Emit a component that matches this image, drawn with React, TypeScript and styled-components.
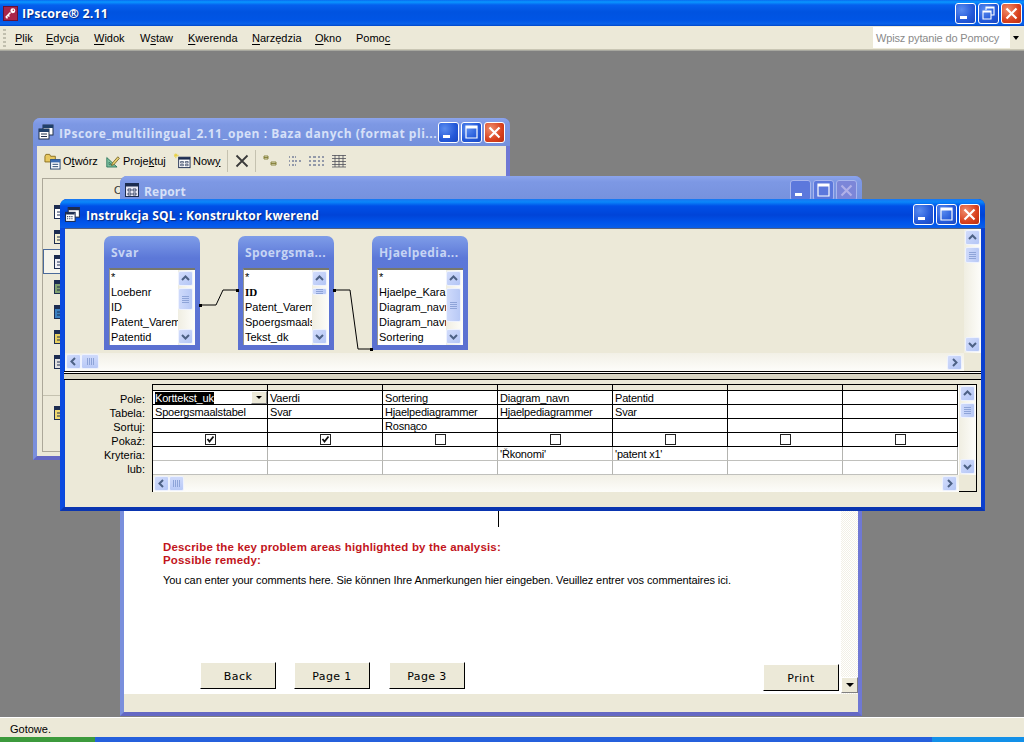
import React from 'react';
import styled, { createGlobalStyle } from 'styled-components';

const UI_FONT = `"Liberation Sans", "Noto Sans", sans-serif`;
const TITLE_FONT = `"Open Sans", "Noto Sans", sans-serif`;

const GlobalStyle = createGlobalStyle`
  html, body { margin: 0; padding: 0; background: #808080; }
  #root { width: 1024px; height: 742px; overflow: hidden; }
  * { box-sizing: border-box; }
`;

const Screen = styled.div`
  width: 1024px;
  height: 742px;
  display: flex;
  flex-direction: column;
  font-family: ${UI_FONT};
  font-size: 11px;
  color: #000;
  overflow: hidden;
`;

const AppTitle = styled.div`
  height: 26px;
  flex: none;
  display: flex;
  align-items: center;
  padding: 0 2px 0 3px;
  background: linear-gradient(180deg, #0a6af0 0, #0997ff 2px, #0560ee 5px, #0053e0 12px, #0055e5 20px, #0a62ea 24px, #0046c8 26px);
`;

const AppName = styled.span`
  margin-left: 4px;
  flex: 1;
  font-family: ${TITLE_FONT};
  font-weight: 700;
  font-size: 12.5px;
  letter-spacing: 0.15px;
  color: #fff;
  text-shadow: 1px 1px 1px #0a2a80;
`;

const CaptionGroup = styled.div`
  display: flex;
  gap: 2px;
`;

const CaptionBtn = styled.div<{ $kind: string; $dim?: boolean }>`
  width: 21px;
  height: 21px;
  border-radius: 3px;
  border: 1px solid ${p => (p.$dim ? '#a8b6ee' : '#fff')};
  background: ${p =>
    p.$kind === 'close'
      ? p.$dim ? '#7c86d8' : 'radial-gradient(circle at 30% 30%, #ef8d6c, #d9411e 60%, #b92e10)'
      : p.$dim ? '#5c78dc' : 'radial-gradient(circle at 30% 30%, #5a8cf0, #2358d8 60%, #1a48c0)'};
  display: flex;
  svg { display: block; }
`;

const Caption = ({ kind, dim }: { kind: string; dim?: boolean }) => (
  <CaptionBtn $kind={kind} $dim={dim}>
    <svg width="19" height="19" viewBox="0 0 19 19">
      {kind === 'min' && <rect x="4" y="12" width="7" height="3" fill="#fff" />}
      {kind === 'max' && (
        <path d="M4 3h11v12H4z M4 4.5h11" fill="none" stroke="#fff" strokeWidth="1.2" />
      )}
      {kind === 'max' && <rect x="4" y="3" width="11" height="2.5" fill="#fff" />}
      {kind === 'restore' && (
        <path d="M7 6V3h8v8h-3 M4 7h8v8H4z M4 8h8 M7 4h8" fill="none" stroke="#fff" strokeWidth="1.1" />
      )}
      {kind === 'close' && (
        <path d="M4.5 4.5l10 10M14.5 4.5l-10 10" stroke={dim ? '#b0b0e8' : '#fff'} strokeWidth="2.2" />
      )}
    </svg>
  </CaptionBtn>
);

const MenuBar = styled.div`
  height: 24px;
  flex: none;
  display: flex;
  align-items: center;
  background: #ece9d8;
  border-bottom: 1px solid #c9c6b4;
  padding: 0 2px 0 3px;
`;

const Gripper = styled.div`
  width: 3px;
  height: 18px;
  margin-right: 9px;
  background: repeating-linear-gradient(180deg, #c1bfae 0 2px, transparent 2px 4px);
`;

const MenuItem = styled.span<{ $w: number }>`
  width: ${p => p.$w}px;
  u { text-underline-offset: 2px; }
`;

const HelpBox = styled.div`
  margin-left: auto;
  width: 149px;
  height: 21px;
  display: flex;
  align-items: center;
  background: #fff;
  color: #8a8a8a;
  padding-left: 3px;
  letter-spacing: -0.15px;
  span { flex: 1; }
`;

const HelpArrow = styled.div`
  width: 12px;
  height: 21px;
  background: #ece9d8;
  display: flex;
  align-items: center;
  justify-content: center;
  &::after {
    content: '';
    border: 3.5px solid transparent;
    border-top: 4px solid #000;
    border-bottom: 0;
  }
`;

const Desktop = styled.div`
  position: relative;
  flex: 1;
  background: #808080;
  border-top: 1px solid #a8a8a0;
`;

const Win = styled.div<{ $x: number; $y: number; $w: number; $h: number; $active?: boolean }>`
  position: absolute;
  left: ${p => p.$x}px;
  top: ${p => p.$y - 51}px;
  width: ${p => p.$w}px;
  height: ${p => p.$h}px;
  display: flex;
  flex-direction: column;
  border-radius: 7px 7px 0 0;
  background: ${p => (p.$active ? '#0a47d8' : '#7b92e0')};
  border-left: 4px solid ${p => (p.$active ? '#0a4ae0' : '#7a8fdc')};
  border-right: 4px solid ${p => (p.$active ? '#0a3fd0' : '#6f78d4')};
  border-bottom: 4px solid ${p => (p.$active ? '#0a35b0' : '#6468c4')};
`;

const WinTitle = styled.div<{ $h: number; $active?: boolean }>`
  height: ${p => p.$h}px;
  flex: none;
  margin: 0 -4px;
  padding: ${p => (p.$active ? '2px' : '0')} 5px 0 5px;
  display: flex;
  align-items: center;
  border-radius: 7px 7px 0 0;
  background: ${p =>
    p.$active
      ? 'linear-gradient(180deg, #1a76f0 0, #0a86fa 3px, #0050e8 7px, #0044d8 16px, #0055ec 24px, #0a5ee8 100%)'
      : 'linear-gradient(180deg, #8ca4ec 0, #7d98e4 6px, #7490dc 100%)'};
`;

const WinName = styled.span<{ $active?: boolean; $wide?: boolean }>`
  flex: 1;
  margin-left: 5px;
  padding-top: 2px;
  font-family: ${TITLE_FONT};
  font-weight: 700;
  font-size: 12px;
  letter-spacing: ${p => (p.$wide ? '0.52px' : '0.2px')};
  white-space: nowrap;
  overflow: hidden;
  color: ${p => (p.$active ? '#fff' : '#d6e0f8')};
  text-shadow: ${p => (p.$active ? '1px 1px 1px #0a2a80' : 'none')};
`;

/* back window */
const DbToolbar = styled.div`
  height: 30px;
  flex: none;
  display: flex;
  align-items: center;
  background: #ece9d8;
  padding-left: 7px;
`;

const ToolBtn = styled.span<{ $w: number }>`
  width: ${p => p.$w}px;
  display: flex;
  align-items: center;
  gap: 2px;
`;

const ToolSep = styled.span`
  width: 1px;
  height: 22px;
  background: #c5c2b0;
  margin: 0 7px 0 6px;
`;

const DbBody = styled.div`
  flex: 1;
  background: #ece9d8;
  padding: 2px 4px 4px 5px;
  display: flex;
`;

const DbFrame = styled.div`
  flex: 1;
  border: 1px solid #aca899;
  background: #fff;
  display: flex;
`;

const ObjectRail = styled.div`
  width: 92px;
  background: #ece9d8;
  display: flex;
  flex-direction: column;
  border-right: 1px solid #aca899;
`;

const RailHead = styled.div`
  height: 20px;
  flex: none;
  padding: 4px 0 0 71px;
  line-height: 14px;
  color: #333;
`;

const ObjectSlot = styled.div<{ $h: number; $sel?: boolean }>`
  height: ${p => p.$h}px;
  padding-left: 10px;
  display: flex;
  align-items: center;
  border: 1px solid ${p => (p.$sel ? '#4a6a9a' : 'transparent')};
  background: ${p => (p.$sel ? '#f5f4ec' : 'transparent')};
`;

const RailGap = styled.div<{ $h: number }>`
  height: ${p => p.$h}px;
  border-bottom: 1px solid #c5c2b0;
`;

/* report window */
const ReportBody = styled.div`
  flex: 1;
  display: flex;
  flex-direction: column;
  background: #fff;
`;

const ReportMain = styled.div`
  flex: 1;
  display: flex;
`;

const ReportPage = styled.div`
  flex: 1;
  display: flex;
  flex-direction: column;
`;

const PageRule = styled.div`
  margin-left: 374px;
  width: 1px;
  height: 323px;
  background: #000;
  flex: none;
`;

const Problem = styled.div`
  margin: 14px 0 0 39px;
  font-weight: 700;
  font-size: 11.5px;
  letter-spacing: 0.17px;
  line-height: 13px;
  color: #c2151c;
  height: 26px;
`;

const Comment = styled.div`
  margin: 6px 0 0 39px;
  line-height: 14px;
  letter-spacing: -0.1px;
`;

const ButtonRow = styled.div`
  margin-top: auto;
  display: flex;
  align-items: flex-start;
  height: 32px;
  padding-left: 76px;
`;

const PageButton = styled.div<{ $gap?: number; $drop?: number }>`
  width: 76px;
  height: 27px;
  margin-left: ${p => p.$gap ?? 0}px;
  margin-top: ${p => p.$drop ?? 0}px;
  padding-top: 1px;
  background: #ece9d8;
  border: 1px solid;
  border-color: #fff #000 #000 #fff;
  display: flex;
  align-items: center;
  justify-content: center;
  font-family: "DejaVu Sans", sans-serif;
  font-size: 11px;
  letter-spacing: 0.4px;
`;

const ReportScroll = styled.div`
  width: 17px;
  display: flex;
  flex-direction: column;
  justify-content: flex-end;
  background: repeating-conic-gradient(#f2f0e6 0 25%, #fff 0 50%) 0 0 / 2px 2px;
`;

const ReportDrop = styled.div`
  width: 17px;
  height: 16px;
  margin-bottom: 1px;
  background: #ece9d8;
  border: 1px solid;
  border-color: #fff #808080 #808080 #fff;
  display: flex;
  align-items: center;
  justify-content: center;
  &::after {
    content: '';
    border: 4px solid transparent;
    border-top: 4px solid #000;
    border-bottom: 0;
  }
`;

const ReportFooter = styled.div`
  height: 18px;
  flex: none;
  background: #ece9d8;
`;

/* query designer */
const DesignerBody = styled.div`
  flex: 1;
  display: flex;
  flex-direction: column;
  background: #ece9d8;
  border-top: 1px solid #56617e;
  margin-left: 1px;
`;

const TablePane = styled.div`
  height: 142px;
  flex: none;
  display: grid;
  grid-template-columns: 1fr 17px;
  grid-template-rows: 1fr 18px;
`;

const Canvas = styled.div`
  position: relative;
  display: flex;
  gap: 38px;
  padding: 7px 0 0 39px;
`;

const Joins = styled.svg`
  position: absolute;
  left: 0;
  top: 0;
`;

const TableCard = styled.div`
  width: 96px;
  height: 114px;
  flex: none;
  display: flex;
  flex-direction: column;
  border-radius: 7px 7px 0 0;
  background: linear-gradient(180deg, #7f9de8 0, #5c78d8 22px, #5b70d0 100%);
  padding: 0 5px 5px;
`;

const TableName = styled.div`
  height: 32px;
  flex: none;
  display: flex;
  align-items: center;
  padding-left: 2px;
  font-family: ${TITLE_FONT};
  font-weight: 700;
  font-size: 12px;
  letter-spacing: 0.4px;
  white-space: nowrap;
  color: #c6d4f4;
`;

const FieldBox = styled.div`
  flex: 1;
  display: flex;
  background: #fff;
  border-top: 2px solid #77786c;
  border-left: 1px solid #9a9a90;
  min-height: 0;
`;

const FieldList = styled.div`
  flex: 1;
  overflow: hidden;
  padding: 0 0 0 1px;
`;

const FieldRow = styled.div<{ $key?: boolean }>`
  height: 15px;
  line-height: 15px;
  white-space: nowrap;
  font-weight: ${p => (p.$key ? 700 : 400)};
  font-family: ${p => (p.$key ? '"Liberation Serif", serif' : 'inherit')};
`;

const VScroll = styled.div`
  width: 17px;
  flex: 1;
  display: flex;
  flex-direction: column;
  padding: 1px;
  background: linear-gradient(90deg, #f0eee2, #fdfdfa);
`;

const CardScroll = styled(VScroll)`
  flex: none;
  padding: 1px 2px 1px 0;
`;

const HScroll = styled.div`
  height: 18px;
  display: flex;
  padding: 1px 2px 1px 1px;
  background: linear-gradient(180deg, #f2f0e6, #fdfdfa);
`;

const ScrollBtn = styled.div<{ $after?: boolean }>`
  width: 15px;
  height: 15px;
  flex: none;
  margin: ${p => (p.$after ? 'auto 0 0 auto' : '0')};
  border-radius: 2px;
  border: 1px solid #eef2fe;
  background: linear-gradient(135deg, #d2dcfb, #b4c6f6);
  display: flex;
  align-items: center;
  justify-content: center;
`;

const Thumb = styled.div<{ $len: number; $horizontal?: boolean }>`
  flex: none;
  width: ${p => (p.$horizontal ? `${p.$len}px` : '15px')};
  height: ${p => (p.$horizontal ? '15px' : `${p.$len}px`)};
  margin: ${p => (p.$horizontal ? '0' : '2px 0 0')};
  border-radius: 2px;
  border: 1px solid #eef2fe;
  background: ${p =>
    p.$horizontal
      ? 'linear-gradient(180deg, #cfdafb, #b8c9f6)'
      : 'linear-gradient(90deg, #cfdafb, #b8c9f6)'};
  display: flex;
  align-items: center;
  justify-content: center;
  &::after {
    content: '';
    width: 7px;
    height: 7px;
    max-height: 100%;
    background: repeating-linear-gradient(
      ${p => (p.$horizontal ? '90deg' : '180deg')},
      #8ea4d8 0 1px,
      transparent 1px 2px
    );
  }
`;

const Corner = styled.div`
  background: #ece9d8;
`;

const GridSide = styled.div`
  width: 17px;
  flex: none;
  display: grid;
  grid-template-rows: 1fr 16px;
`;

const Splitter = styled.div`
  height: 9px;
  flex: none;
  border-top: 1px solid #000;
  border-bottom: 1px solid #000;
  background: linear-gradient(180deg, #fff 0 1px, #000 1px 2px, #d8d5c4 2px, #d8d5c4 100%);
  margin-left: -1px;
`;

const CriteriaPane = styled.div`
  flex: 1;
  display: flex;
  padding: 4px 0 0;
`;

const PaneLabels = styled.div`
  width: 85px;
  flex: none;
  padding: 8px 4px 0 0;
  text-align: right;
  margin-left: -1px;
  margin-right: 3px;
`;

const RowLabel = styled.div`
  height: 14px;
  line-height: 14px;
`;

const GridBox = styled.div`
  width: 825px;
  height: 108px;
  flex: none;
  display: flex;
  border: 1px solid #000;
`;

const GridMain = styled.div`
  width: 806px;
  flex: none;
  display: flex;
  flex-direction: column;
`;

const Grid = styled.div`
  display: grid;
  grid-template-columns: repeat(7, 115px);
  grid-template-rows: 6px repeat(6, 14px);
  height: 90px;
  background: #fff;
`;

const ColHead = styled.div`
  background: #ece9d8;
  border-right: 1px solid #000;
  border-bottom: 1px solid #000;
`;

const Cell = styled.div<{ $soft?: boolean; $center?: boolean }>`
  position: relative;
  height: 14px;
  line-height: 13px;
  padding: ${p => (p.$center ? '0' : '1px 0 0 2px')};
  letter-spacing: -0.2px;
  white-space: nowrap;
  overflow: hidden;
  display: flex;
  align-items: center;
  justify-content: ${p => (p.$center ? 'center' : 'flex-start')};
  border-right: 1px solid ${p => (p.$soft ? '#b4b4b0' : '#000')};
  border-bottom: 1px solid ${p => (p.$soft ? '#c0c0bc' : '#000')};
`;

const Selected = styled.span`
  background: #000;
  color: #fff;
`;

const CellDrop = styled.div`
  position: absolute;
  right: 0;
  top: 0;
  width: 16px;
  height: 13px;
  background: #ece9d8;
  border: 1px solid;
  border-color: #fff #808080 #808080 #fff;
  display: flex;
  align-items: center;
  justify-content: center;
  &::after {
    content: '';
    border: 3px solid transparent;
    border-top: 3px solid #000;
    border-bottom: 0;
  }
`;

const Check = styled.div`
  width: 11px;
  height: 11px;
  border: 1px solid #222;
  background: #fff;
  display: flex;
`;

const StatusBar = styled.div`
  height: 20px;
  flex: none;
  background: #ece9d8;
  border-top: 1px solid #fff;
  display: flex;
  align-items: center;
  padding: 3px 0 0 10px;
`;

const TaskBar = styled.div`
  height: 5px;
  flex: none;
  display: flex;
`;

const TaskPart = styled.div<{ $w?: number; $bg: string }>`
  ${p => (p.$w ? `width: ${p.$w}px;` : 'flex: 1;')}
  background: ${p => p.$bg};
`;

const Arrow = ({ dir }: { dir: 'up' | 'down' | 'left' | 'right' }) => {
  const d = {
    up: 'M2 7l3.5-3.5L9 7',
    down: 'M2 4l3.5 3.5L9 4',
    left: 'M7 2L3.5 5.5 7 9',
    right: 'M4 2l3.5 3.5L4 9',
  }[dir];
  return (
    <svg width="11" height="11" viewBox="0 0 11 11">
      <path d={d} fill="none" stroke="#4d6185" strokeWidth="2" />
    </svg>
  );
};

const KeyIcon = () => (
  <svg width="15" height="15" viewBox="0 0 16 16">
    <rect x="0.5" y="0.5" width="15" height="15" fill="#a8254a" stroke="#6a1030" />
    <path d="M3 12l5-5M3 12l2 1M5 10l2 1" stroke="#fff" strokeWidth="1.6" fill="none" />
    <circle cx="10.5" cy="5" r="2.6" fill="#fff" />
    <circle cx="11" cy="4.6" r="0.8" fill="#a8254a" />
  </svg>
);

const DbIcon = () => (
  <svg width="16" height="16" viewBox="0 0 16 16">
    <rect x="5" y="1" width="10" height="10" fill="#fff" stroke="#20304a" />
    <rect x="5" y="1" width="10" height="3" fill="#20406a" />
    <rect x="1" y="5" width="10" height="10" fill="#fff" stroke="#20304a" />
    <rect x="1" y="5" width="10" height="3" fill="#20406a" />
    <path d="M3 10h6M3 12.5h6" stroke="#20304a" />
  </svg>
);

const FormIcon = () => (
  <svg width="14" height="14" viewBox="0 0 14 14">
    <rect x="0.5" y="0.5" width="13" height="13" fill="#e8e8f4" stroke="#1c2c50" />
    <rect x="1" y="1" width="12" height="2.5" fill="#1c2c50" />
    <path d="M3 6h3v2H3zM8 6h3v2H8zM3 10h3v2H3zM8 10h3v2H8z" fill="none" stroke="#1c2c50" strokeWidth="0.8" />
  </svg>
);

const SqlIcon = () => (
  <svg width="16" height="15" viewBox="0 0 15 14">
    <rect x="3" y="0.5" width="10.5" height="9" fill="#fff" stroke="#1c2c50" />
    <rect x="3" y="0.5" width="10.5" height="2.5" fill="#1c2c50" />
    <rect x="0.5" y="5" width="9" height="8.5" fill="#fff" stroke="#1c2c50" />
    <rect x="1" y="5" width="8" height="2" fill="#1c2c50" />
    <path d="M2 9h6M2 11h6" stroke="#1c2c50" strokeDasharray="1 1" />
  </svg>
);

const OpenIcon = () => (
  <svg width="17" height="18" viewBox="0 0 18 18">
    <path d="M1 4l1-2h4l1 2h5v6H1z" fill="#e8c860" stroke="#8a7020" />
    <rect x="7" y="7.5" width="10" height="10" fill="#fff" stroke="#20406a" />
    <rect x="7" y="7.5" width="10" height="3" fill="#3a6ab0" />
    <path d="M9 12.5h6M9 15h6" stroke="#20406a" />
  </svg>
);

const DesignIcon = () => (
  <svg width="15" height="17" viewBox="0 0 19 18">
    <path d="M1 4v12h13z M4 10v3h3z" fill="#7ec0a0" stroke="#1c6a50" fillRule="evenodd" />
    <path d="M8 11l7-8 2 2-7 8-3 1z" fill="#e8d070" stroke="#6a5a20" />
  </svg>
);

const NewIcon = () => (
  <svg width="18" height="18" viewBox="0 0 19 18">
    <path d="M3 1v5M1 3h5M1.5 1.5l3 3M4.5 1.5l-3 3" stroke="#e8d040" />
    <rect x="6" y="5" width="12" height="11" fill="#fff" stroke="#1c2c50" />
    <rect x="6" y="5" width="12" height="2.5" fill="#1c2c50" />
    <path d="M8 9.5h3v1.5H8zM13 9.5h3v1.5h-3zM8 12.5h3V14H8zM13 12.5h3V14h-3z" fill="none" stroke="#1c2c50" strokeWidth="0.7" />
  </svg>
);

const DeleteIcon = () => (
  <svg width="14" height="14" viewBox="0 0 14 14">
    <path d="M1.5 1.5l11 11M12.5 1.5l-11 11" stroke="#3a3a3a" strokeWidth="1.8" />
  </svg>
);

const ViewIcon = ({ kind }: { kind: number }) => (
  <svg width="16" height="14" viewBox="0 0 16 14" stroke="#3a4a7a" fill="none">
    {kind === 0 && <path d="M1 2h4v3H1z M1 3.5h4 M8 8h5v3H8z M8 9.5h5" stroke="#807a30" strokeWidth="0.9" />}
    {kind === 1 && <path d="M2 3h1M5 3h4M2 7h1M5 7h4M9 7h1M12 7h3M2 11h1M5 11h4" strokeDasharray="2 1" />}
    {kind === 2 && <path d="M1 3h2M5 3h3M10 3h2M14 3h2M1 7h2M5 7h3M10 7h2M14 7h2M1 11h2M5 11h3M10 11h2M14 11h2" />}
    {kind === 3 && <path d="M1 1.5h14M1 4.5h14M1 7.5h14M1 10.5h14M1 13h14M4 1v12M8 1v12M12 1v12" strokeWidth="0.8" stroke="#50505a" />}
  </svg>
);

const RailIcon = ({ color }: { color: string }) => (
  <svg width="14" height="16" viewBox="0 0 14 16">
    <rect x="0.5" y="1.5" width="13" height="13" fill={color} stroke="#1c2c50" />
    <rect x="1" y="2" width="12" height="3" fill="#1c2c50" />
    <path d="M3 8h8M3 11h8" stroke="#1c2c50" />
  </svg>
);

const Tick = () => (
  <svg width="9" height="9" viewBox="0 0 9 9">
    <path d="M1.5 4l2 2.5L7.5 1.5" fill="none" stroke="#111" strokeWidth="1.8" />
  </svg>
);

const TableScroll = ({ thumb }: { thumb: number }) => (
  <CardScroll>
    <ScrollBtn><Arrow dir="up" /></ScrollBtn>
    <Thumb $len={thumb} />
    <ScrollBtn $after><Arrow dir="down" /></ScrollBtn>
  </CardScroll>
);

const tables = [
  { name: 'Svar', thumb: 22, fields: ['*', 'Loebenr', 'ID', 'Patent_Varem', 'Patentid'] },
  { name: 'Spoergsma...', thumb: 7, keyRow: 1, fields: ['*', 'ID', 'Patent_Varem', 'Spoergsmaals', 'Tekst_dk'] },
  { name: 'Hjaelpedia...', thumb: 34, fields: ['*', 'Hjaelpe_Karal', 'Diagram_navn', 'Diagram_navn', 'Sortering'] },
];

const labels = ['Pole:', 'Tabela:', 'Sortuj:', 'Pokaż:', 'Kryteria:', 'lub:'];

const columns = [
  { field: 'Korttekst_uk', table: 'Spoergsmaalstabel', sort: '', show: true, crit: '' },
  { field: 'Vaerdi', table: 'Svar', sort: '', show: true, crit: '' },
  { field: 'Sortering', table: 'Hjaelpediagrammer', sort: 'Rosnąco', show: false, crit: '' },
  { field: 'Diagram_navn', table: 'Hjaelpediagrammer', sort: '', show: false, crit: "'Řkonomi'" },
  { field: 'Patentid', table: 'Svar', sort: '', show: false, crit: "'patent x1'" },
  { field: '', table: '', sort: '', show: false, crit: '' },
  { field: '', table: '', sort: '', show: false, crit: '' },
];

const menus: [React.ReactNode, number][] = [
  [<><u>P</u>lik</>, 31],
  [<><u>E</u>dycja</>, 48],
  [<><u>W</u>idok</>, 46],
  [<>W<u>s</u>taw</>, 48],
  [<><u>K</u>werenda</>, 64],
  [<><u>N</u>arzędzia</>, 63],
  [<><u>O</u>kno</>, 41],
  [<>Pomo<u>c</u></>, 50],
];

const railSlots = ['#fff', '#f4f0d0', '#f0f0f8', '#80a070', '#3a80c0', '#e8d060', '#e0e0e0'];

export default function App() {
  return (
    <Screen>
      <GlobalStyle />
      <AppTitle>
        <KeyIcon />
        <AppName>IPscore® 2.11</AppName>
        <CaptionGroup>
          <Caption kind="min" />
          <Caption kind="restore" />
          <Caption kind="close" />
        </CaptionGroup>
      </AppTitle>
      <MenuBar>
        <Gripper />
        {menus.map(([label, w], i) => (
          <MenuItem key={i} $w={w}>{label}</MenuItem>
        ))}
        <HelpBox>
          <span>Wpisz pytanie do Pomocy</span>
          <HelpArrow />
        </HelpBox>
      </MenuBar>
      <Desktop>
        <Win $x={33} $y={118} $w={477} $h={342}>
          <WinTitle $h={28}>
            <DbIcon />
            <WinName $wide>IPscore_multilingual_2.11_open : Baza danych (format pli...</WinName>
            <CaptionGroup>
              <Caption kind="min" />
              <Caption kind="max" />
              <Caption kind="close" />
            </CaptionGroup>
          </WinTitle>
          <DbToolbar>
            <ToolBtn $w={62}><OpenIcon /><span>O<u>t</u>wórz</span></ToolBtn>
            <ToolBtn $w={67}><DesignIcon /><span>Proje<u>k</u>tuj</span></ToolBtn>
            <ToolBtn $w={48}><NewIcon /><span>Now<u>y</u></span></ToolBtn>
            <ToolSep />
            <DeleteIcon />
            <ToolSep />
            <ToolBtn $w={24}><ViewIcon kind={0} /></ToolBtn>
            <ToolBtn $w={21}><ViewIcon kind={1} /></ToolBtn>
            <ToolBtn $w={23}><ViewIcon kind={2} /></ToolBtn>
            <ToolBtn $w={20}><ViewIcon kind={3} /></ToolBtn>
          </DbToolbar>
          <DbBody>
            <DbFrame>
              <ObjectRail>
                <RailHead>Obiekty</RailHead>
                {railSlots.map((c, i) => (
                  <ObjectSlot key={i} $h={i === 6 ? 26 : 25} $sel={i === 2}>
                    <RailIcon color={c} />
                  </ObjectSlot>
                ))}
                <RailGap $h={21} />
                <ObjectSlot $h={34}><RailIcon color="#f0d870" /></ObjectSlot>
              </ObjectRail>
            </DbFrame>
          </DbBody>
        </Win>

        <Win $x={120} $y={176} $w={742} $h={540}>
          <WinTitle $h={28}>
            <FormIcon />
            <WinName>Report</WinName>
            <CaptionGroup>
              <Caption kind="min" dim />
              <Caption kind="max" dim />
              <Caption kind="close" dim />
            </CaptionGroup>
          </WinTitle>
          <ReportBody>
            <ReportMain>
              <ReportPage>
                <PageRule />
                <Problem>
                  Describe the key problem areas highlighted by the analysis:
                  <br />
                  Possible remedy:
                </Problem>
                <Comment>
                  You can enter your comments here. Sie können Ihre Anmerkungen hier eingeben. Veuillez entrer vos commentaires ici.
                </Comment>
                <ButtonRow>
                  <PageButton>Back</PageButton>
                  <PageButton $gap={18}>Page 1</PageButton>
                  <PageButton $gap={19}>Page 3</PageButton>
                  <PageButton $gap={298} $drop={2}>Print</PageButton>
                </ButtonRow>
              </ReportPage>
              <ReportScroll>
                <ReportDrop />
              </ReportScroll>
            </ReportMain>
            <ReportFooter />
          </ReportBody>
        </Win>

        <Win $x={60} $y={199} $w={925} $h={312} $active>
          <WinTitle $h={29} $active>
            <SqlIcon />
            <WinName $active>Instrukcja SQL : Konstruktor kwerend</WinName>
            <CaptionGroup>
              <Caption kind="min" />
              <Caption kind="max" />
              <Caption kind="close" />
            </CaptionGroup>
          </WinTitle>
          <DesignerBody>
            <TablePane>
              <Canvas>
                <Joins width="340" height="130">
                  <path d="M135 76h16l7-15h15M269 61h16l8 59h14" fill="none" stroke="#000" strokeWidth="1" />
                  <path d="M134 75h3v3h-3zM171 60h3v3h-3zM268 60h3v3h-3zM305 119h3v3h-3z" fill="#000" />
                </Joins>
                {tables.map(t => (
                  <TableCard key={t.name}>
                    <TableName>{t.name}</TableName>
                    <FieldBox>
                      <FieldList>
                        {t.fields.map((f, i) => (
                          <FieldRow key={i} $key={t.keyRow === i}>{f}</FieldRow>
                        ))}
                      </FieldList>
                      <TableScroll thumb={t.thumb} />
                    </FieldBox>
                  </TableCard>
                ))}
              </Canvas>
              <VScroll>
                <ScrollBtn><Arrow dir="up" /></ScrollBtn>
                <Thumb $len={16} />
                <ScrollBtn $after><Arrow dir="down" /></ScrollBtn>
              </VScroll>
              <HScroll>
                <ScrollBtn><Arrow dir="left" /></ScrollBtn>
                <Thumb $len={18} $horizontal />
                <ScrollBtn $after><Arrow dir="right" /></ScrollBtn>
              </HScroll>
              <Corner />
            </TablePane>
            <Splitter />
            <CriteriaPane>
              <PaneLabels>
                {labels.map(l => <RowLabel key={l}>{l}</RowLabel>)}
              </PaneLabels>
              <GridBox>
                <GridMain>
                  <Grid>
                    {columns.map((_, i) => <ColHead key={i} />)}
                    {columns.map((c, i) => (
                      <Cell key={i}>
                        {i === 0 ? <Selected>{c.field}</Selected> : c.field}
                        {i === 0 && <CellDrop />}
                      </Cell>
                    ))}
                    {columns.map((c, i) => <Cell key={i}>{c.table}</Cell>)}
                    {columns.map((c, i) => <Cell key={i}>{c.sort}</Cell>)}
                    {columns.map((c, i) => (
                      <Cell key={i} $center>
                        <Check>{c.show && <Tick />}</Check>
                      </Cell>
                    ))}
                    {columns.map((c, i) => <Cell key={i} $soft>{c.crit}</Cell>)}
                    {columns.map((_, i) => <Cell key={i} $soft />)}
                  </Grid>
                  <HScroll>
                    <ScrollBtn><Arrow dir="left" /></ScrollBtn>
                    <Thumb $len={15} $horizontal />
                    <ScrollBtn $after><Arrow dir="right" /></ScrollBtn>
                  </HScroll>
                </GridMain>
                <GridSide>
                  <VScroll>
                    <ScrollBtn><Arrow dir="up" /></ScrollBtn>
                    <Thumb $len={15} />
                    <ScrollBtn $after><Arrow dir="down" /></ScrollBtn>
                  </VScroll>
                  <Corner />
                </GridSide>
              </GridBox>
            </CriteriaPane>
          </DesignerBody>
        </Win>
      </Desktop>
      <StatusBar>Gotowe.</StatusBar>
      <TaskBar>
        <TaskPart $w={95} $bg="#3c9a3c" />
        <TaskPart $bg="#2560dc" />
        <TaskPart $w={92} $bg="#1290e8" />
      </TaskBar>
    </Screen>
  );
}
